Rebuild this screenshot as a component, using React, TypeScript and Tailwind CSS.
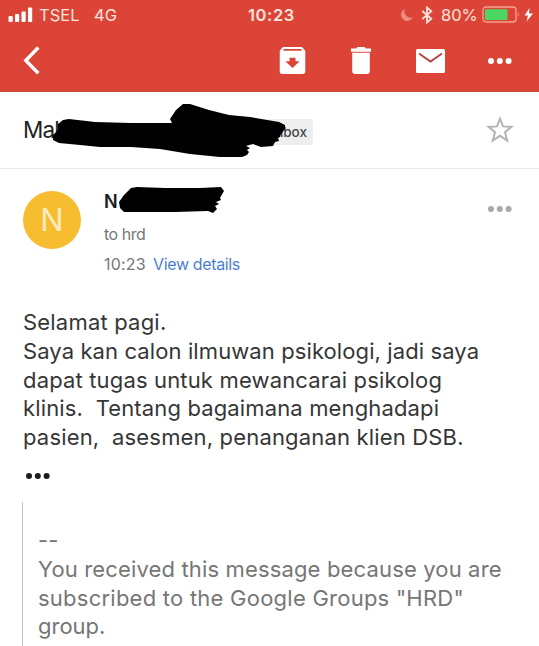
import React from 'react';

const bodyLines = [
  { text: 'Selamat pagi.', tracking: 'tracking-[0.2px]' },
  { text: 'Saya kan calon ilmuwan psikologi, jadi saya', tracking: 'tracking-[0.1px]' },
  { text: 'dapat tugas untuk mewancarai psikolog', tracking: 'tracking-[0.16px]' },
  { text: 'klinis.  Tentang bagaimana menghadapi', tracking: 'tracking-[0.14px]' },
  { text: 'pasien,  asesmen, penanganan klien DSB.', tracking: 'tracking-[0.17px]' },
];

const footerLines = [
  { text: '--', tracking: 'tracking-[0.1px]' },
  { text: 'You received this message because you are', tracking: 'tracking-[0.15px]' },
  { text: 'subscribed to the Google Groups "HRD"', tracking: 'tracking-[0.24px]' },
  { text: 'group.', tracking: 'tracking-[0px]' },
];

const Dots = ({ className }: { className: string }) => (
  <svg className={className} width="26" height="8" viewBox="0 0 26 8" fill="currentColor">
    <circle cx="4" cy="4" r="3" />
    <circle cx="12.8" cy="4" r="3" />
    <circle cx="21.6" cy="4" r="3" />
  </svg>
);

const StatusBar = () => (
  <div className="flex h-[30px] items-center text-[16.5px] leading-[30px] text-[#ffe3dc]">
    <svg className="ml-[8px] mr-[6px]" width="25" height="16" viewBox="0 0 25 16" fill="#fff">
      <rect x="0.5" y="9" width="4.2" height="6" rx="1" />
      <rect x="7" y="7" width="4.2" height="8" rx="1" />
      <rect x="13.5" y="4.5" width="4.2" height="10.5" rx="1" />
      <rect x="20" y="0.5" width="4.2" height="14.5" rx="1" />
    </svg>
    <span className="w-[55px]">TSEL</span>
    <span className="w-[154px]">4G</span>
    <span className="w-[152px] font-semibold tracking-[0.6px]">10:23</span>
    <svg width="14" height="14" viewBox="0 0 14 14" fill="#ee8b80">
      <path d="M5 1A6.2 6.2 0 1 0 13 9.2A6.2 6.2 0 0 1 5 1Z" />
    </svg>
    <svg className="ml-[7px] mr-[8px]" width="12" height="18" viewBox="0 0 12 18" fill="none" stroke="currentColor" strokeWidth="1.8">
      <path d="M1.3 5L10.3 12.8L6 16.5V1.5L10.3 5.2L1.3 13" />
    </svg>
    <span className="w-[41px]">80%</span>
    <svg width="56" height="18" viewBox="0 0 56 18" fill="none">
      <rect x="1" y="1" width="33" height="15" rx="3" stroke="#f9a093" strokeWidth="1.3" />
      <rect x="3" y="3.2" width="22.5" height="10.8" rx="1" fill="#4cd763" />
      <path d="M35.8 6Q38 8.5 35.8 11Z" fill="#f9a093" />
      <path d="M47.5 2L42.5 9.5H46L44.5 15.5L51 7.5H47Z" fill="#fff" />
    </svg>
  </div>
);

const Toolbar = () => (
  <div className="flex h-[61px] items-center text-white">
    <svg className="ml-[23px] mr-[239px]" width="18" height="29" viewBox="0 0 18 29" fill="none" stroke="currentColor" strokeWidth="3.4">
      <path d="M15.3 1.5L2.8 14.5L15.3 27.2" />
    </svg>
    <svg className="-translate-x-[0.5px]" width="26" height="27" viewBox="0 0 26 27">
      <path d="M3.5 0H22.5L26 4V24Q26 27 23 27H3Q0 27 0 24V4Z" fill="currentColor" />
      <path d="M4 2.9H22" stroke="#db4437" strokeWidth="1.6" />
      <path d="M10 10.7H16V14.3H20.2L13 21L5.8 14.3H10Z" fill="#db4437" />
    </svg>
    <svg className="ml-[44px]" width="22" height="27" viewBox="0 0 22 27" fill="currentColor">
      <path d="M1 1.5H6L7.5 0H14.5L16 1.5H21V4.7H1Z" />
      <path d="M2.2 5.7H19.8V24Q19.8 27 16.8 27H5.2Q2.2 27 2.2 24Z" />
    </svg>
    <svg className="ml-[44px]" width="29" height="24" viewBox="0 0 29 24">
      <rect width="29" height="24" rx="1.5" fill="currentColor" />
      <path d="M3 4.5L14.5 12.5L26 4.5" fill="none" stroke="#b84346" strokeWidth="1.9" />
    </svg>
    <Dots className="ml-[42px]" />
  </div>
);

const Subject = () => (
  <div className="relative flex h-[77px] items-center border-b border-[#e8e8e8]">
    <span className="ml-[23px] w-[232px] text-[22.5px] tracking-[-0.9px] text-[#222]">Mal</span>
    <span className="flex h-[26px] w-[58px] items-center justify-end rounded-[2px] bg-[#eeeeee] pr-[6px] text-[13.5px] font-medium text-[#444] mt-[4px]">
      Inbox
    </span>
    <svg className="ml-[173px]" width="28" height="28" viewBox="0 0 28 28" fill="none" stroke="#b3b3b3" strokeWidth="2">
      <path d="M14 2.7L17 10.4L25.4 10.9L19 16.2L21.2 24.5L14 19.8L6.8 24.5L9 16.2L2.6 10.9L11 10.4Z" />
    </svg>
    {/* marker over the rest of the subject */}
    <svg className="absolute left-[50px] top-[10px]" width="240" height="60" viewBox="50 102 240 60">
      <path d="M63 120L69 119L95 122L131 123L172 123L170 119L176 110L183 104L190 104L209 110L229 115L250 117L279 122L285 125L285 129L281 134L280 137L278 138L279 141L275 142L273 146L261 147L253 144L246 146L250 148L247 150L249 152L247 155L242 157L220 157L190 154L160 149L131 147L100 147L80 145L59 143L53 140L53 135L58 130L58 124Z" />
    </svg>
  </div>
);

const Sender = () => (
  <div className="relative flex h-[139px] items-start">
    <div className="ml-[23px] mt-[22px] flex size-[58px] items-center justify-center rounded-full bg-[#f6bd30] text-[31px] text-[#fdebc0]">
      N
    </div>
    <div className="ml-[23px] mt-[18px] w-[383px] text-[16px] leading-[30px] text-[#777]">
      <div className="text-[18px] font-semibold text-[#1c1c1c]">N</div>
      <div className="mt-[2px] tracking-[-0.5px]">to hrd</div>
      <div className="flex">
        <span className="w-[49px] tracking-[0.2px]">10:23</span>
        <span className="tracking-[-0.35px] text-[#4a7fd0]">View details</span>
      </div>
    </div>
    <Dots className="mt-[36px] text-[#a8a8a8]" />
    <svg className="absolute left-[116px] top-[15px]" width="110" height="32" viewBox="116 183 110 32">
      <path d="M119 201L124 194L131 187L137 186L165 187L200 187L221 186L224 190L220 197L221 199L216 201L219 203L215 205L217 208L213 212L208 210L175 211L140 211L124 211L120 207Z" />
    </svg>
  </div>
);

function App() {
  return (
    <div className="h-[646px] w-[539px] overflow-hidden bg-white font-['Inter',sans-serif]">
      <header className="h-[92px] border-b border-[#c94a42] bg-[#db4437]">
        <StatusBar />
        <Toolbar />
      </header>
      <Subject />
      <Sender />
      <div className="ml-[23px] whitespace-pre text-[22px] leading-[28.8px] text-[#363636]">
        {bodyLines.map((line) => (
          <div key={line.text} className={line.tracking}>{line.text}</div>
        ))}
      </div>
      <Dots className="ml-[25px] mt-[20px] text-[#1c1c1c]" />
      <div className="ml-[22px] mt-[22px] h-[160px] whitespace-pre border-l border-[#c4c4c4] pl-[15px] pt-[24px] text-[22px] leading-[28.8px] text-[#767676]">
        {footerLines.map((line) => (
          <div key={line.text} className={line.tracking}>{line.text}</div>
        ))}
      </div>
    </div>
  );
}

export default App;
